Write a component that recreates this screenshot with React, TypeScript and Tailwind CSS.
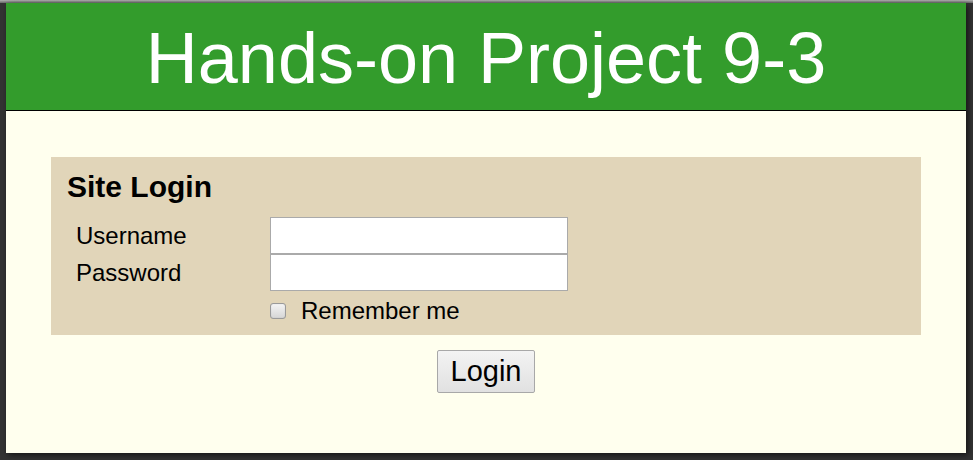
import React from "react";

export default function App() {
  return (
    <div className="w-[973px] h-[460px] bg-[#333333] overflow-hidden" style={{ fontFamily: '"Liberation Sans", Arial, sans-serif' }}>
      <div className="h-[3px] bg-gradient-to-b from-[#b4b4b4] to-[#6a6a6a]" />
      <div className="ml-[6px] w-[960px] h-[450px] bg-[#ffffee] shadow-[2px_2px_6px_rgba(0,0,0,0.6)]">
        <header className="h-[108px] bg-[#339c2c] border-b border-black flex items-center justify-center">
          <h1 className="text-white text-[72px] leading-[83px] mt-[4px]">Hands-on Project 9-3</h1>
        </header>
        <div className="px-[45px] pt-[46px]">
          <div className="bg-[#e1d5b9] h-[178px] pt-[13px] pl-[16px]">
            <h2 className="font-bold text-[30px] leading-[33px] text-black">Site Login</h2>
            <div className="mt-[14px] grid grid-cols-[203px_298px] text-[24px] leading-[28px] text-black">
              <div className="pl-[9px] h-[37px] flex items-center">Username</div>
              <input type="text" className="h-[37px] bg-white border border-[#aaaaaa] outline-none" />
              <div className="pl-[9px] h-[37px] flex items-center">Password</div>
              <input type="password" className="h-[37px] bg-white border border-[#aaaaaa] outline-none" />
              <div />
              <div className="flex items-center mt-[6px]">
                <span className="inline-block w-[16px] h-[16px] rounded-[3px] border border-[#9a9a9a] bg-gradient-to-b from-[#f4f4f4] to-[#d6d6d6] shadow-[inset_0_0_1px_rgba(0,0,0,0.2)]" />
                <span className="ml-[15px]">Remember me</span>
              </div>
            </div>
          </div>
          <div className="flex justify-center mt-[15px]">
            <button className="w-[98px] h-[43px] border border-[#a8a8a8] rounded-[2px] bg-gradient-to-b from-[#f3f3f3] to-[#e1e1e1] text-[29px] leading-[33px] text-black">
              Login
            </button>
          </div>
        </div>
      </div>
    </div>
  );
}
